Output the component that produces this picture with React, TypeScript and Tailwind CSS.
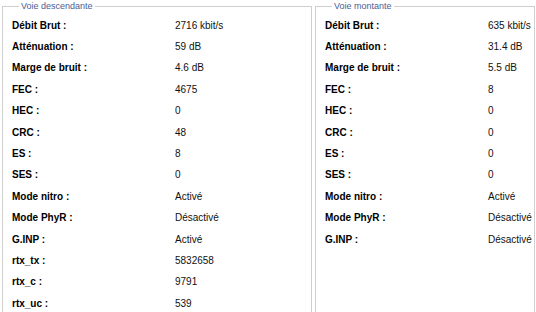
import React from "react";

type Row = [string, string];

const down: Row[] = [
  ["Débit Brut :", "2716 kbit/s"],
  ["Atténuation :", "59 dB"],
  ["Marge de bruit :", "4.6 dB"],
  ["FEC :", "4675"],
  ["HEC :", "0"],
  ["CRC :", "48"],
  ["ES :", "8"],
  ["SES :", "0"],
  ["Mode nitro :", "Activé"],
  ["Mode PhyR :", "Désactivé"],
  ["G.INP :", "Activé"],
  ["rtx_tx :", "5832658"],
  ["rtx_c :", "9791"],
  ["rtx_uc :", "539"],
];

const up: Row[] = [
  ["Débit Brut :", "635 kbit/s"],
  ["Atténuation :", "31.4 dB"],
  ["Marge de bruit :", "5.5 dB"],
  ["FEC :", "8"],
  ["HEC :", "0"],
  ["CRC :", "0"],
  ["ES :", "0"],
  ["SES :", "0"],
  ["Mode nitro :", "Activé"],
  ["Mode PhyR :", "Désactivé"],
  ["G.INP :", "Désactivé"],
];

function Panel({ title, rows, className }: { title: string; rows: Row[]; className: string }) {
  return (
    <fieldset className={`border border-[#cfcfcf] pl-[9px] ${className}`}>
      <legend className="ml-[7px] px-[2px] text-[9px] leading-[11px] text-[#4a5e96]">{title}</legend>
      <div className="flex flex-col pt-[3px]">
        {rows.map(([label, value]) => (
          <div key={label} className="flex h-[21.4px] items-center">
            <span className="w-[163px] shrink-0 font-bold text-black">{label}</span>
            <span className="text-[#111]">{value}</span>
          </div>
        ))}
      </div>
    </fieldset>
  );
}

export default function App() {
  return (
    <div
      className="flex h-[312px] w-[536px] items-start gap-[3px] overflow-hidden bg-white pl-[2px] pt-[1px] text-[10px] leading-[12px]"
      style={{ fontFamily: '"Liberation Sans", Arial, sans-serif' }}
    >
      <Panel title="Voie descendante" rows={down} className="w-[310px] shrink-0 h-[330px]" />
      <Panel title="Voie montante" rows={up} className="w-[220px] shrink-0 h-[330px]" />
    </div>
  );
}
